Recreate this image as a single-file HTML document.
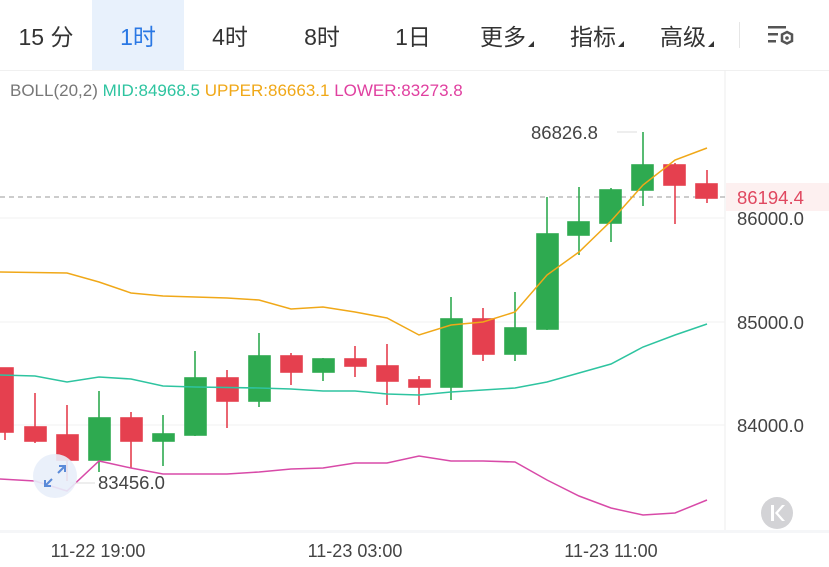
<!DOCTYPE html>
<html><head><meta charset="utf-8"><style>
html,body{margin:0;padding:0;background:#fff;width:829px;height:567px;overflow:hidden}
body{font-family:"Liberation Sans","Noto Sans CJK SC",sans-serif;position:relative}
.tab{position:absolute;top:0;height:70px;line-height:74px;font-size:23px;color:#333;text-align:center}
.tri{display:inline-block;width:0;height:0;border-left:6px solid transparent;border-bottom:6px solid #333;margin-left:2px;vertical-align:-2px}
</style></head><body>
<div style="position:absolute;left:92px;top:0;width:92px;height:70px;background:#e8f1fc"></div>
<div class="tab" style="left:0;width:92px">15 分</div>
<div class="tab" style="left:92px;width:92px;color:#2a78e4">1时</div>
<div class="tab" style="left:184px;width:92px">4时</div>
<div class="tab" style="left:276px;width:92px">8时</div>
<div class="tab" style="left:368px;width:90px">1日</div>
<div class="tab" style="left:472px;width:70px">更多<span class="tri"></span></div>
<div class="tab" style="left:562px;width:70px">指标<span class="tri"></span></div>
<div class="tab" style="left:652px;width:70px">高级<span class="tri"></span></div>
<div style="position:absolute;left:739px;top:22px;width:1px;height:26px;background:#e6e6e6"></div>
<svg style="position:absolute;left:766px;top:24px" width="32" height="26" viewBox="0 0 32 26">
<rect x="2" y="2" width="18" height="2.5" fill="#555"/>
<rect x="2" y="9" width="10" height="2.5" fill="#555"/>
<rect x="2" y="16" width="8" height="2.5" fill="#555"/>
<polygon points="21,8 26,10.5 26,17 21,19.5 16,17 16,10.5" fill="none" stroke="#555" stroke-width="2.5"/>
<circle cx="21" cy="14" r="1.8" fill="#555"/>
</svg>
<div style="position:absolute;left:0;top:70px;width:829px;height:1px;background:#f0f0f0"></div>
<div style="position:absolute;left:10px;top:81px;font-size:17px;white-space:nowrap"><span style="color:#777">BOLL(20,2)</span> <span style="color:#2ec4a0">MID:84968.5</span> <span style="color:#f0a818">UPPER:86663.1</span> <span style="color:#e040a0">LOWER:83273.8</span></div>

<svg style="position:absolute;left:0;top:0" width="829" height="567">
<line x1="725" y1="70" x2="725" y2="530" stroke="#eee"/>
<line x1="0" y1="218" x2="725" y2="218" stroke="#f2f2f2"/>
<line x1="0" y1="322" x2="725" y2="322" stroke="#f2f2f2"/>
<line x1="0" y1="425" x2="725" y2="425" stroke="#f2f2f2"/>
<rect x="0" y="530" width="829" height="3" fill="#f5f6f8"/>
<line x1="0" y1="197" x2="725" y2="197" stroke="#999" stroke-dasharray="5,4"/>
<rect x="726" y="183" width="103" height="28" fill="#fdf0f0"/>
<g stroke-width="1.6">
<g stroke="#e5404f" fill="#e5404f">
<line x1="5" y1="368" x2="5" y2="440"/><rect x="-6" y="368" width="19" height="64"/>
<line x1="35" y1="393" x2="35" y2="443"/><rect x="25" y="427" width="21" height="14"/>
<line x1="67" y1="405" x2="67" y2="481"/><rect x="57" y="435" width="21" height="25"/>
<line x1="131" y1="412" x2="131" y2="468"/><rect x="121" y="418" width="21" height="23"/>
<line x1="227" y1="370" x2="227" y2="428"/><rect x="217" y="378" width="21" height="23"/>
<line x1="291" y1="353" x2="291" y2="385"/><rect x="281" y="356" width="21" height="16"/>
<line x1="355" y1="346" x2="355" y2="377"/><rect x="345" y="359" width="21" height="7"/>
<line x1="387" y1="344" x2="387" y2="405"/><rect x="377" y="366" width="21" height="15"/>
<line x1="419" y1="376" x2="419" y2="405"/><rect x="409" y="380" width="21" height="7"/>
<line x1="483" y1="308" x2="483" y2="361"/><rect x="473" y="319" width="21" height="35"/>
<line x1="675" y1="163" x2="675" y2="224"/><rect x="664" y="165" width="21" height="20"/>
<line x1="707" y1="170" x2="707" y2="203"/><rect x="696" y="184" width="21" height="14"/>
</g>
<g stroke="#2eaa50" fill="#2eaa50">
<line x1="99" y1="391" x2="99" y2="472"/><rect x="89" y="418" width="21" height="42"/>
<line x1="163" y1="415" x2="163" y2="466"/><rect x="153" y="434" width="21" height="7"/>
<line x1="195" y1="351" x2="195" y2="436"/><rect x="185" y="378" width="21" height="57"/>
<line x1="259" y1="333" x2="259" y2="407"/><rect x="249" y="356" width="21" height="45"/>
<line x1="323" y1="358" x2="323" y2="381"/><rect x="313" y="359" width="21" height="13"/>
<line x1="451" y1="297" x2="451" y2="400"/><rect x="441" y="319" width="21" height="68"/>
<line x1="515" y1="292" x2="515" y2="361"/><rect x="505" y="328" width="21" height="26"/>
<line x1="547" y1="197" x2="547" y2="330"/><rect x="537" y="234" width="21" height="95"/>
<line x1="579" y1="187" x2="579" y2="255"/><rect x="568" y="222" width="21" height="13"/>
<line x1="611" y1="188" x2="611" y2="242"/><rect x="600" y="190" width="21" height="33"/>
<line x1="643" y1="132" x2="643" y2="206"/><rect x="632" y="165" width="21" height="25"/>
</g>
</g>
<g fill="none" stroke-width="1.5">
<polyline stroke="#2ec4a0" points="0,375 35,376 67,382 99,377 131,379 163,386 195,387 259,388 291,389 323,391 355,391 387,394 419,395 451,392 483,390 515,388 547,382 579,373 611,364 643,347 675,335 707,324"/>
<polyline stroke="#f0a818" points="0,272 67,273 99,282 131,293 163,296 195,297 227,298 259,300 291,309 323,307 355,312 387,318 419,335 451,325 483,322 515,312 547,275 579,252 611,221 643,185 675,160 707,148"/>
<polyline stroke="#d84aa8" points="0,479 35,481 67,491 99,461 131,468 163,474 195,474 227,474 259,472 291,469 323,468 355,463 387,463 419,456 451,461 483,461 515,462 547,480 579,496 611,508 643,515 675,513 707,500"/>
</g>
<line x1="617" y1="132" x2="637" y2="132" stroke="#ddd"/>
<line x1="70" y1="483" x2="95" y2="483" stroke="#ddd"/>
<circle cx="55" cy="476" r="22" fill="#e8eefa" opacity="0.9"/>
<g stroke="#5a8ad8" stroke-width="2" fill="none">
<line x1="46" y1="485" x2="52" y2="479"/><polyline points="45,480 45,486 51,486"/>
<line x1="58" y1="473" x2="64" y2="467"/><polyline points="59,466 65,466 65,472"/>
</g>
<circle cx="777" cy="513" r="16" fill="#d3d3d6"/>
<g fill="#fff"><rect x="771" y="505" width="3" height="16"/><polygon points="775,513 782,505 785,505 778,513 785,521 782,521"/></g>
<g font-family="Liberation Sans,sans-serif" font-size="18.5" fill="#444">
<text x="531" y="139">86826.8</text>
<text x="98" y="489">83456.0</text>
<text x="737" y="204" fill="#e04860">86194.4</text>
<text x="737" y="225">86000.0</text>
<text x="737" y="329">85000.0</text>
<text x="737" y="432">84000.0</text>
<text x="98" y="557" text-anchor="middle" font-size="18">11-22 19:00</text>
<text x="355" y="557" text-anchor="middle" font-size="18">11-23 03:00</text>
<text x="611" y="557" text-anchor="middle" font-size="18">11-23 11:00</text>
</g>
</svg>
</body></html>
